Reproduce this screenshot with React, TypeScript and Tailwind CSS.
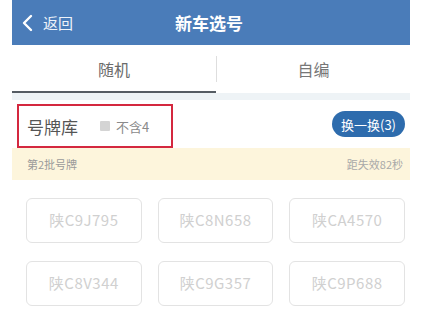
import React from "react";

const plates = ["陕C9J795", "陕C8N658", "陕CA4570", "陕C8V344", "陕C9G357", "陕C9P688"];

export default function App() {
  return (
    <div
      className="w-[427px] h-[318px] bg-white overflow-hidden pl-[12px] pr-[17px]"
      style={{ fontFamily: '"Noto Sans CJK SC", "Noto Sans", sans-serif' }}
    >
      <div className="w-[398px]">
        {/* Header */}
        <div className="relative h-[45px] bg-[#4a7cb9] flex items-center">
          <div className="flex items-center pl-[9px] gap-[8px] text-white">
            <svg width="14" height="18" viewBox="0 0 14 18" fill="none">
              <path d="M10 2 L3 9 L10 16" stroke="white" strokeWidth="2.4" strokeLinecap="round" strokeLinejoin="round" />
            </svg>
            <span className="text-[15px] leading-none text-[#eef3fa]">返回</span>
          </div>
          <div className="absolute left-0 right-0 text-center text-white text-[17px] font-semibold leading-none pointer-events-none pr-[4px]">
            新车选号
          </div>
        </div>

        {/* Tabs */}
        <div className="h-[48px] flex relative">
          <div className="w-[204px] flex items-center justify-center border-b-[2px] border-[#555c63] text-[16px] text-[#6b6b6b] pt-[2px]">
            随机
          </div>
          <div className="w-[1px] h-[26px] bg-[#dedede] self-center" />
          <div className="flex-1 flex items-center justify-center text-[16px] text-[#777] pb-[1px]">自编</div>
        </div>
        <div className="h-[7px] bg-[#eef3f6]" />

        {/* Library row */}
        <div className="h-[48px] flex items-center justify-between">
          <div className="ml-[5px] w-[156px] h-[44px] border-[2px] border-[#d4283f] flex items-center pl-[8px] self-start mt-[4px]">
            <span className="text-[17px] text-[#555] leading-none">号牌库</span>
            <span className="ml-[22px] w-[10px] h-[10px] bg-[#d4d4d4] rounded-[1px]" />
            <span className="ml-[6px] text-[13px] text-[#8a8a8a] leading-none">不含4</span>
          </div>
          <div className="mr-[5px] h-[26px] px-[9px] rounded-full bg-[#2e6cad] flex items-center text-white text-[13px] leading-none">
            换一换(3)
          </div>
        </div>

        {/* Batch info */}
        <div className="h-[32px] bg-[#fdf5dc] flex items-center justify-between px-[15px]">
          <span className="text-[11px] text-[#9a9a9a]">第2批号牌</span>
          <span className="text-[11px] text-[#a8a8a8] mr-[-8px]">距失效82秒</span>
        </div>

        {/* Plates */}
        <div className="grid grid-cols-3 gap-x-[16px] gap-y-[18px] pl-[14px] pr-[5px] pt-[18px]">
          {plates.map((p) => (
            <div
              key={p}
              className="h-[45px] border border-[#e3e3e3] rounded-[6px] flex items-center justify-center text-[15px] text-[#d0d0d0] tracking-[0.5px]"
            >
              {p}
            </div>
          ))}
        </div>
      </div>
    </div>
  );
}
